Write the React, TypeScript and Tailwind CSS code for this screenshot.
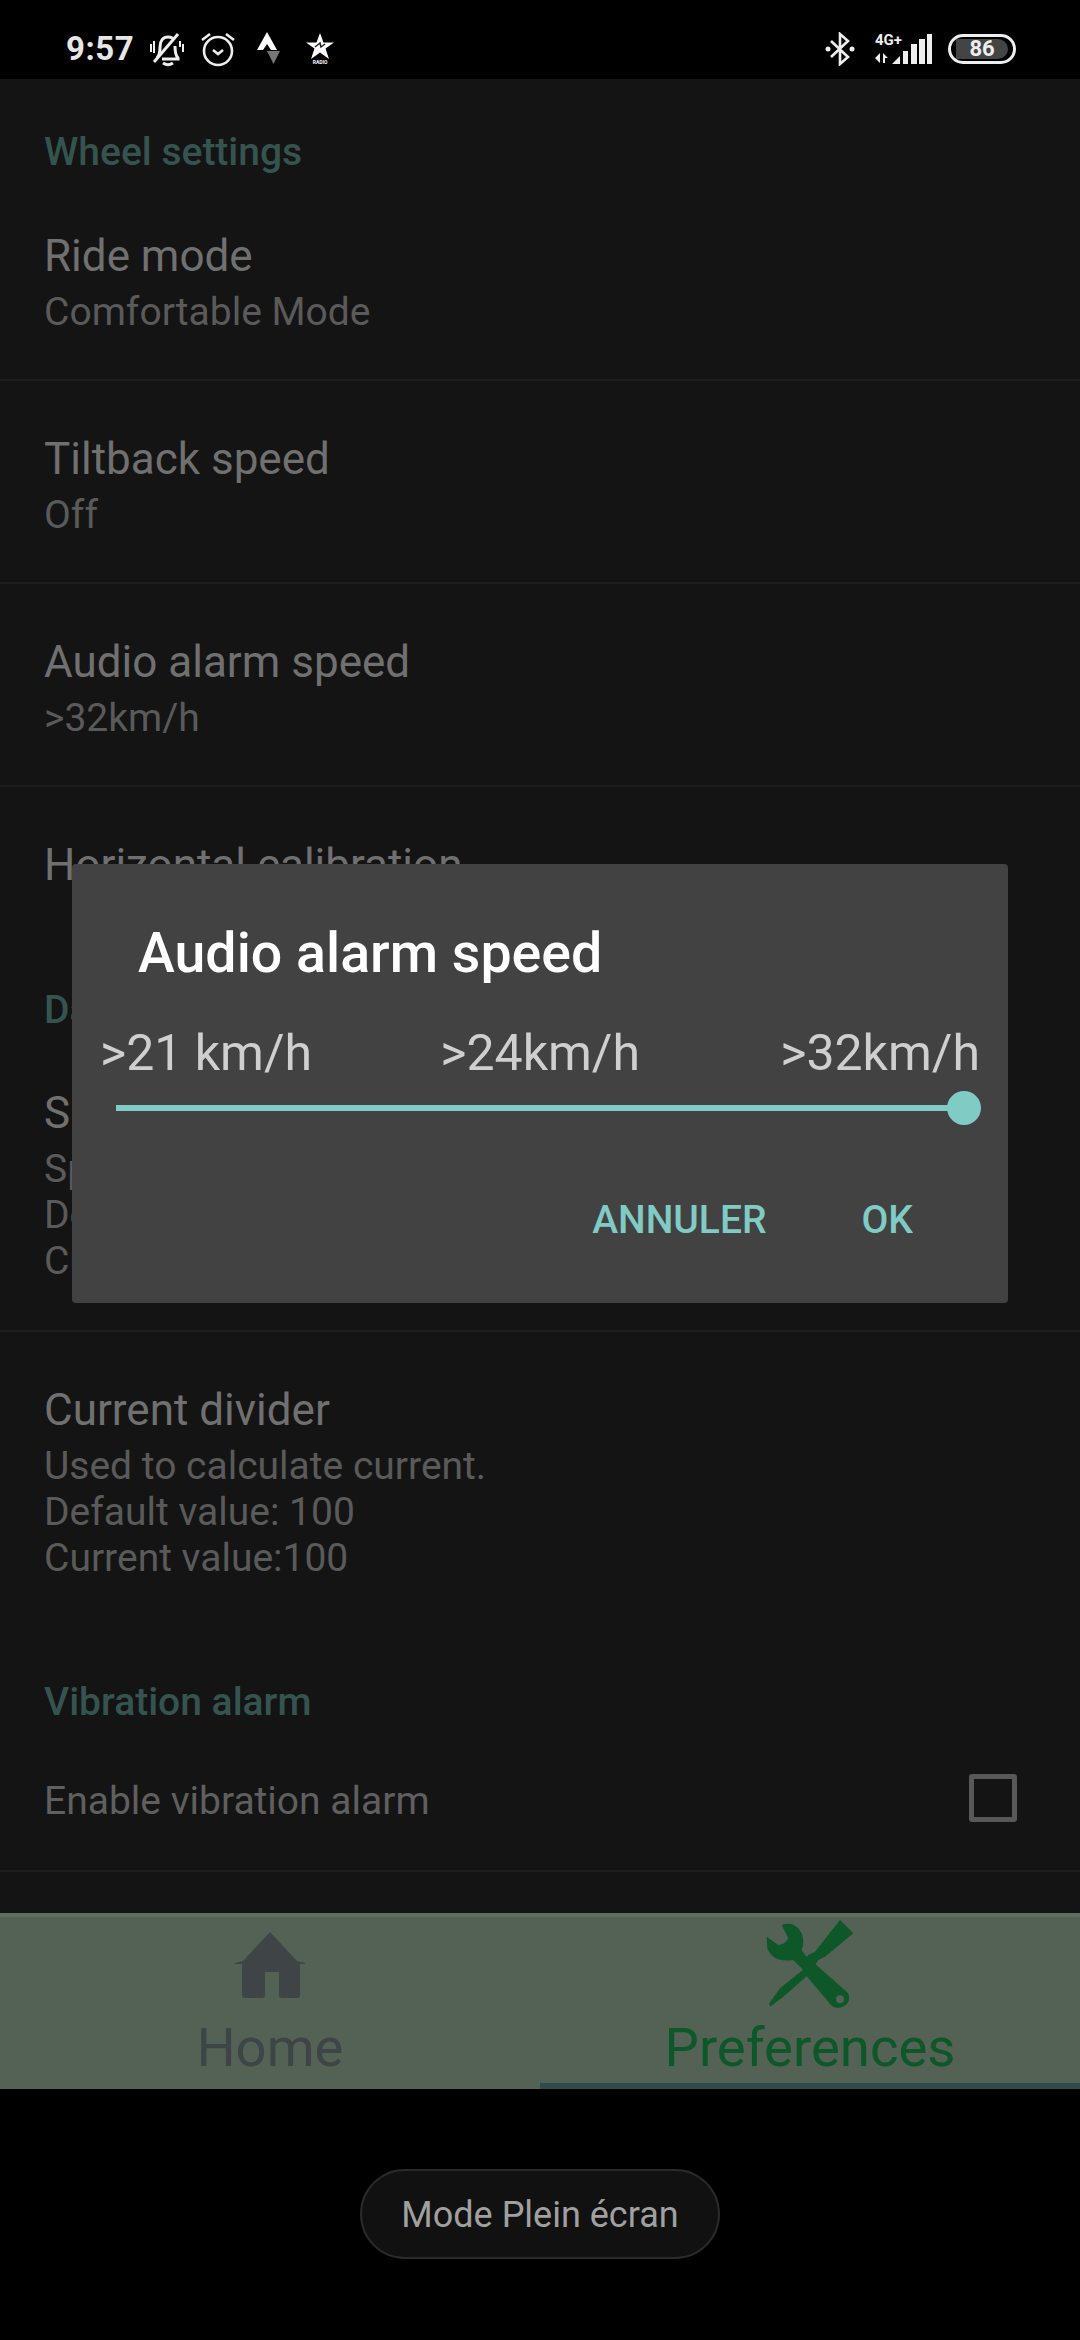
import React from "react";

const font = { fontFamily: "Roboto, sans-serif" };

const Row = ({ title, lines, noBorder }: { title: string; lines: string[]; noBorder?: boolean }) => (
    <div className={"flex flex-col pl-[44px] pt-[50px] " + (noBorder ? "h-[200px]" : "h-[203px] border-b-2 border-[#1e1e1e]")}>
        <div className="mb-[5px] text-[44px] leading-[56px] text-[#707070]">{title}</div>
        {lines.map((l) => (
            <div key={l} className="text-[39px] leading-[46px] text-[#5a5a5a]">{l}</div>
        ))}
    </div>
);

const Section = ({ title, className }: { title: string; className: string }) => (
    <div className={"pl-[44px] text-[39px] leading-[46px] font-medium text-[#35544f] " + className}>{title}</div>
);

const BellOff = () => (
    <svg width="36" height="36" viewBox="0 0 36 36" fill="none" stroke="#eee" strokeWidth="3">
        <path d="M8 27c3-3 3-6 3-11 0-6 3-10 8-10 3 0 5 1 6 3M26 15c0 5 0 9 3 12v1H13M14 32c3 2 7 2 10 0" />
        <path d="M5 31 29 3" />
        <path d="M2 13v8M5 10v12M34 13v8M31 10v6" strokeWidth="2" />
    </svg>
);

const Alarm = () => (
    <svg width="36" height="36" viewBox="0 0 36 36" fill="none" stroke="#eee" strokeWidth="2.6">
        <circle cx="18" cy="20" r="14" />
        <path d="M2 9l8-6M34 9l-8-6M13 19l5 4 5-4" />
    </svg>
);

const Strava = () => (
    <svg width="24" height="34" viewBox="0 0 24 34">
        <path d="M0 18 10 0 20 18h-6l-4-6-4 6z" fill="#fff" />
        <path d="M10 19h13l-6.500 13z" fill="#777" />
    </svg>
);

const Radio = () => (
    <div className="flex flex-col items-center">
        <svg width="28" height="27" viewBox="0 0 28 27">
            <path d="M14 0l3.500 9.500H28l-8.500 6 3.500 10.500-9-6.500-9 6.500 3.500-10.500L0 9.500h10.500z" fill="#fff" />
            <path d="M9 14l5-4 1 4 4-3" stroke="#222" strokeWidth="1.500" fill="none" />
        </svg>
        <div className="text-[5px] leading-[5px] font-bold text-white">RADIO</div>
    </div>
);

const Bluetooth = () => (
    <svg width="30" height="34" viewBox="0 0 30 34" fill="none" stroke="#eee" strokeWidth="2.6">
        <path d="M6 9l17 16-8 7V2l8 7L6 25" />
        <circle cx="3" cy="17" r="2.500" fill="#eee" stroke="none" />
        <circle cx="27" cy="17" r="2.500" fill="#eee" stroke="none" />
    </svg>
);

const Signal = () => (
    <svg width="57" height="30" viewBox="0 0 57 30" fill="#eee">
        <path d="M5 19v10L0 24zM8 19l5 5H10v5H8zM17 30l8-8v8zM28 30V17h5v13zM36 30V10h6v20zM44 30V5h6v25zM52 30V0h5v30z" />
    </svg>
);

const House = () => (
    <svg width="70" height="66" viewBox="0 0 70 66" fill="#3f4547">
        <path d="M35 0 62 29l8 2v1H65v31a3 3 0 0 1-3 3H47a3 3 0 0 1-3-3V40H30v23a3 3 0 0 1-3 3H10a3 3 0 0 1-3-3V32H0v-1l8-2z" />
    </svg>
);

// drawn in the coords of a 3x crop, hence the big viewBox
const Tools = () => (
    <svg width="140" height="115" viewBox="0 0 420 345" fill="#0d5728">
        <path d="M80 95 115 120Q135 120 145 100L125 60Q165 45 185 85 195 115 185 135L195 150 325 265Q335 300 300 308 275 310 265 290L205 220 185 190 160 165Q100 175 82 130Z" />
        <circle cx="300" cy="283" r="12" fill="#536255" />
        <path d="M300 45 340 85 255 155 235 165 215 195 190 170 205 150 225 140Z" />
        <path d="M195 190 210 205 130 275 90 305 88 295 120 250Z" />
    </svg>
);

const App = () => {
    return (
        <div className="relative flex h-[2340px] w-[1080px] flex-col overflow-hidden bg-black" style={font}>
            <div className="flex h-[79px] shrink-0 items-center justify-between bg-black pl-[66px] pr-[64px] pt-[18px]">
                <div className="flex items-center">
                    <span className="text-[33px] font-bold tracking-[0.5px] text-[#e6e6e6]">9:57</span>
                    <div className="ml-[15px]"><BellOff /></div>
                    <div className="ml-[15px]"><Alarm /></div>
                    <div className="ml-[21px]"><Strava /></div>
                    <div className="ml-[25px]"><Radio /></div>
                </div>
                <div className="flex items-center">
                    <Bluetooth />
                    <div className="relative ml-[20px] h-[30px] w-[57px]">
                        <Signal />
                        <span className="absolute left-0 top-0 text-[15px] leading-[13px] font-bold text-[#eee]">4G+</span>
                    </div>
                    <div className="ml-[16px] flex h-[30px] w-[68px] items-center justify-center rounded-full border-[3px] border-[#eee]">
                        <div className="flex h-[20px] w-[52px] items-center justify-center rounded-r-full bg-[#444] text-[22px] font-bold text-[#eee]">86</div>
                    </div>
                </div>
            </div>

            <div className="flex h-[1834px] shrink-0 flex-col bg-[#141414]">
                <Section title="Wheel settings" className="mb-[3px] pt-[50px]" />
                <Row title="Ride mode" lines={["Comfortable Mode"]} />
                <Row title="Tiltback speed" lines={["Off"]} />
                <Row title="Audio alarm speed" lines={[">32km/h"]} />
                <Row title="Horizontal calibration" lines={[]} noBorder />
                <Section title="Data" className="" />
                <div className="flex h-[299px] flex-col border-b-2 border-[#1e1e1e] pl-[44px] pt-[52px]">
                    <div className="mb-[5px] text-[44px] leading-[56px] text-[#707070]">Speed</div>
                    <div className="text-[39px] leading-[46px] text-[#5a5a5a]">Speed</div>
                    <div className="text-[39px] leading-[46px] text-[#5a5a5a]">Default</div>
                    <div className="text-[39px] leading-[46px] text-[#5a5a5a]">Current</div>
                </div>
                <div className="flex flex-col pl-[44px] pt-[50px]">
                    <div className="mb-[5px] text-[44px] leading-[56px] text-[#707070]">Current divider</div>
                    <div className="text-[39px] leading-[46px] text-[#5a5a5a]">Used to calculate current.</div>
                    <div className="text-[39px] leading-[46px] text-[#5a5a5a]">Default value: 100</div>
                    <div className="text-[39px] leading-[46px] text-[#5a5a5a]">Current value:100</div>
                </div>
                <Section title="Vibration alarm" className="pt-[98px]" />
                <div className="flex h-[147px] items-center justify-between border-b-2 border-[#1e1e1e] pl-[44px] pr-[63px]">
                    <span className="mt-[8px] text-[39px] text-[#5f5f5f]">Enable vibration alarm</span>
                    <div className="h-[48px] w-[48px] rounded-[3px] border-[5px] border-[#585858]" />
                </div>
            </div>

            <div className="flex h-[176px] shrink-0 border-t-[4px] border-[#5e6d60] bg-[#536255]">
                <div className="flex w-[540px] flex-col items-center pt-[15px]">
                    <House />
                    <div className="mt-[17px] text-[54.5px] leading-[64px] text-[#3f4547]">Home</div>
                </div>
                <div className="flex w-[540px] flex-col items-center border-b-[6px] border-[#2f4c4b]">
                    <div className="-mt-[12px]"><Tools /></div>
                    <div className="-mt-[5px] text-[54.5px] leading-[64px] text-[#0d5728]">Preferences</div>
                </div>
            </div>

            <div className="flex flex-1 items-start justify-center pt-[80px]">
                <div className="flex h-[90px] w-[360px] items-center justify-center rounded-[45px] border-2 border-[#2a2a2a] bg-[#111111] pt-[2px] text-[36px] text-[#a0a0a0]">
                    Mode Plein écran
                </div>
            </div>

            {/* dialog over the dimmed page */}
            <div className="absolute left-[72px] top-[864px] flex h-[439px] w-[936px] flex-col rounded-[4px] bg-[#424242]">
                <div className="pl-[66px] pt-[57px] text-[55.5px] leading-[66px] font-medium text-white">Audio alarm speed</div>
                <div className="mt-[36px] flex justify-between pl-[28px] pr-[28px] text-[50px] leading-[60px] text-[#cfcfcf]">
                    <span>&gt;21 km/h</span>
                    <span className="mr-[12px]">&gt;24km/h</span>
                    <span>&gt;32km/h</span>
                </div>
                <div className="relative ml-[44px] mt-[22px] h-[6px] w-[848px] bg-[#80cbc4]">
                    <div className="absolute right-[-17px] top-[-14px] h-[34px] w-[34px] rounded-full bg-[#80cbc4]" />
                </div>
                <div className="mt-[86px] flex justify-end gap-[95px] pr-[95px] text-[39px] leading-[46px] font-medium text-[#80cbc4]">
                    <span>ANNULER</span>
                    <span>OK</span>
                </div>
            </div>
        </div>
    );
};

export default App;
